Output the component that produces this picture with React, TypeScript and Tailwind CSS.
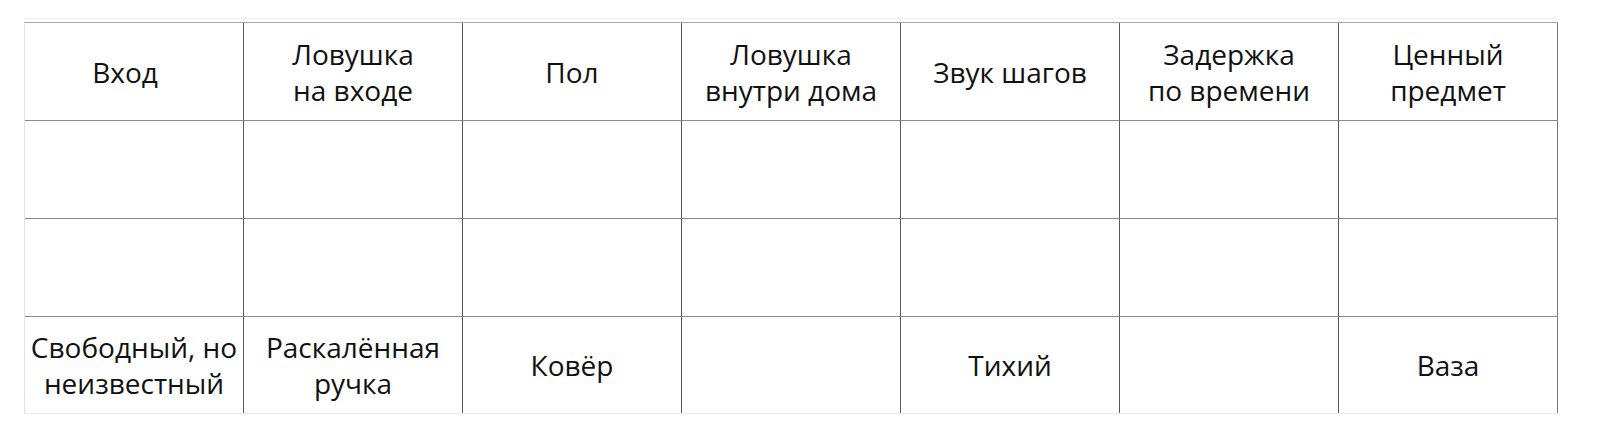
import React from "react";

const header = [
  ["Вход"],
  ["Ловушка", "на входе"],
  ["Пол"],
  ["Ловушка", "внутри дома"],
  ["Звук шагов"],
  ["Задержка", "по времени"],
  ["Ценный", "предмет"],
];

const last = [
  ["Свободный, но", "неизвестный"],
  ["Раскалённая", "ручка"],
  ["Ковёр"],
  [],
  ["Тихий"],
  [],
  ["Ваза"],
];

function Cell({
  lines,
  col,
  rowH,
  lastRow,
  extra = "",
}: {
  lines: string[];
  col: number;
  rowH: string;
  lastRow?: boolean;
  extra?: string;
}) {
  const right = col === 6 ? "border-r border-r-[#7a7a7a]" : "border-r border-r-[#5a5a5a]";
  const bottom = lastRow ? "" : "border-b border-b-[#8a8a8a]";
  return (
    <div className={`flex flex-col items-center justify-center text-center ${rowH} ${right} ${bottom} ${extra}`}>
      {lines.map((l, i) => (
        <div key={i} className="whitespace-nowrap">
          {l}
        </div>
      ))}
    </div>
  );
}

export default function App() {
  return (
    <div className="w-[1600px] h-[440px] bg-white pt-[18px]">
      <div className="ml-[24px] w-[1534px] border-t border-t-[#f0f0f0] pt-[3px]">
        <div
          className="grid grid-cols-[repeat(7,219px)] border-t border-t-[#a8a8a8] border-l border-l-[#e2e2e2] border-b border-b-[#ececec] text-[28px] leading-[36px] text-[#111111]"
          style={{ fontFamily: '"Open Sans", "Noto Sans", sans-serif' }}
        >
          {header.map((h, i) => (
            <Cell key={"h" + i} lines={h} col={i} rowH="h-[98px]" extra={i === 0 ? "pr-[18px]" : ""} />
          ))}
          {header.map((_, i) => (
            <Cell key={"a" + i} lines={[]} col={i} rowH="h-[98px]" />
          ))}
          {header.map((_, i) => (
            <Cell key={"b" + i} lines={[]} col={i} rowH="h-[98px]" />
          ))}
          {last.map((l, i) => (
            <Cell key={"c" + i} lines={l} col={i} rowH="h-[96px]" lastRow />
          ))}
        </div>
      </div>
    </div>
  );
}
